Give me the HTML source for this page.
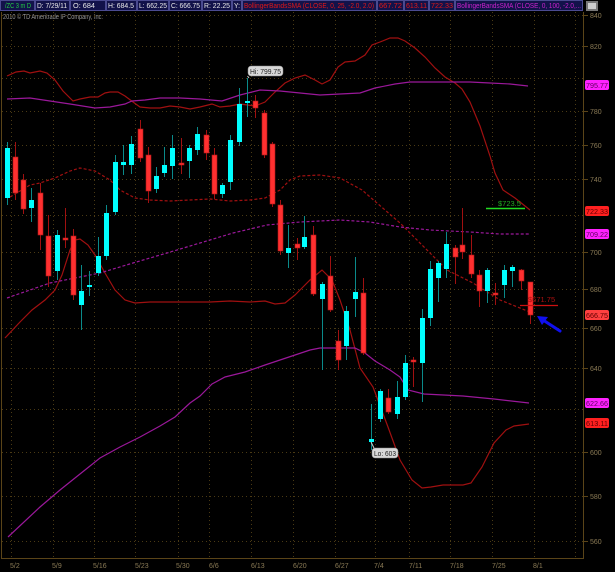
<!DOCTYPE html>
<html><head><meta charset="utf-8"><style>
html,body{margin:0;padding:0;background:#000;width:615px;height:572px;overflow:hidden}
svg{display:block}
text{font-family:"Liberation Sans",sans-serif}
</style></head><body>
<svg width="615" height="572" viewBox="0 0 615 572" xmlns="http://www.w3.org/2000/svg">
<rect width="615" height="572" fill="#000"/>
<!-- header -->
<rect x="0" y="0" width="583" height="11" fill="#12124a"/>
<g stroke="#4a4a90" stroke-width="1" fill="none">
<rect x="0.5" y="0.5" width="34" height="10"/><rect x="35.5" y="0.5" width="34" height="10"/><rect x="70.5" y="0.5" width="35" height="10"/><rect x="106.5" y="0.5" width="30" height="10"/><rect x="137.5" y="0.5" width="31" height="10"/><rect x="169.5" y="0.5" width="32" height="10"/><rect x="202.5" y="0.5" width="29" height="10"/><rect x="232.5" y="0.5" width="9" height="10"/><rect x="242.5" y="0.5" width="134" height="10"/><rect x="377.5" y="0.5" width="26" height="10"/><rect x="404.5" y="0.5" width="24" height="10"/><rect x="429.5" y="0.5" width="25" height="10"/><rect x="455.5" y="0.5" width="127" height="10"/>
</g>
<g font-size="7" fill="#e8e8e8" lengthAdjust="spacingAndGlyphs">
<text x="5" y="8" fill="#22cc44" textLength="26" lengthAdjust="spacingAndGlyphs">/ZC 3 m D</text>
<text x="37" y="8" textLength="30" lengthAdjust="spacingAndGlyphs">D: 7/29/11</text>
<text x="73" y="8" textLength="22" lengthAdjust="spacingAndGlyphs">O: 684</text>
<text x="108" y="8" textLength="26" lengthAdjust="spacingAndGlyphs">H: 684.5</text>
<text x="139" y="8" textLength="28" lengthAdjust="spacingAndGlyphs">L: 662.25</text>
<text x="171" y="8" textLength="29" lengthAdjust="spacingAndGlyphs">C: 666.75</text>
<text x="204" y="8" textLength="26" lengthAdjust="spacingAndGlyphs">R: 22.25</text>
<text x="234" y="8" textLength="6" lengthAdjust="spacingAndGlyphs">Y:</text>
<text x="244" y="8" fill="#e01818" textLength="130" lengthAdjust="spacingAndGlyphs">BollingerBandsSMA (CLOSE, 0, 25, -2.0, 2.0)</text>
<text x="379" y="8" fill="#e01818" textLength="23" lengthAdjust="spacingAndGlyphs">667.72</text>
<text x="406" y="8" fill="#e01818" textLength="21" lengthAdjust="spacingAndGlyphs">613.11</text>
<text x="431" y="8" fill="#e01818" textLength="22" lengthAdjust="spacingAndGlyphs">722.33</text>
<text x="457" y="8" fill="#cc22cc" textLength="124" lengthAdjust="spacingAndGlyphs">BollingerBandsSMA (CLOSE, 0, 100, -2.0,...</text>
</g>
<rect x="586" y="1" width="12" height="10" fill="#777"/><rect x="588" y="3" width="8" height="6" fill="#ccc"/>
<text x="3" y="19" font-size="7" fill="#999" textLength="100" lengthAdjust="spacingAndGlyphs">2010 © TD Ameritrade IP Company, Inc.</text>
<!-- axes -->
<line x1="1.5" y1="12" x2="1.5" y2="558" stroke="#5a4418"/>
<line x1="583.5" y1="12" x2="583.5" y2="558" stroke="#5a4418"/>
<line x1="1" y1="558.5" x2="584" y2="558.5" stroke="#5a4418"/>
<!-- grid -->
<g stroke="#4a3a14" stroke-dasharray="1 3" stroke-width="1">
<line x1="2" y1="15.5" x2="583" y2="15.5"/><line x1="2" y1="46.5" x2="583" y2="46.5"/><line x1="2" y1="78.5" x2="583" y2="78.5"/><line x1="2" y1="111.5" x2="583" y2="111.5"/><line x1="2" y1="145.5" x2="583" y2="145.5"/><line x1="2" y1="179.5" x2="583" y2="179.5"/><line x1="2" y1="215.5" x2="583" y2="215.5"/><line x1="2" y1="252.5" x2="583" y2="252.5"/><line x1="2" y1="289.5" x2="583" y2="289.5"/><line x1="2" y1="328.5" x2="583" y2="328.5"/><line x1="2" y1="368.5" x2="583" y2="368.5"/><line x1="2" y1="409.5" x2="583" y2="409.5"/><line x1="2" y1="452.5" x2="583" y2="452.5"/><line x1="2" y1="496.5" x2="583" y2="496.5"/><line x1="2" y1="541.5" x2="583" y2="541.5"/>
<line x1="11.5" y1="12" x2="11.5" y2="558"/><line x1="53.5" y1="12" x2="53.5" y2="558"/><line x1="94.5" y1="12" x2="94.5" y2="558"/><line x1="135.5" y1="12" x2="135.5" y2="558"/><line x1="178.5" y1="12" x2="178.5" y2="558"/><line x1="209.5" y1="12" x2="209.5" y2="558"/><line x1="251.5" y1="12" x2="251.5" y2="558"/><line x1="293.5" y1="12" x2="293.5" y2="558"/><line x1="335.5" y1="12" x2="335.5" y2="558"/><line x1="375.5" y1="12" x2="375.5" y2="558"/><line x1="409.5" y1="12" x2="409.5" y2="558"/><line x1="450.5" y1="12" x2="450.5" y2="558"/><line x1="492.5" y1="12" x2="492.5" y2="558"/><line x1="534.5" y1="12" x2="534.5" y2="558"/><line x1="575.5" y1="12" x2="575.5" y2="558"/>
</g>
<g stroke="#5a4418"><line x1="584" y1="15.5" x2="588" y2="15.5"/><line x1="584" y1="46.5" x2="588" y2="46.5"/><line x1="584" y1="111.5" x2="588" y2="111.5"/><line x1="584" y1="145.5" x2="588" y2="145.5"/><line x1="584" y1="179.5" x2="588" y2="179.5"/><line x1="584" y1="252.5" x2="588" y2="252.5"/><line x1="584" y1="289.5" x2="588" y2="289.5"/><line x1="584" y1="328.5" x2="588" y2="328.5"/><line x1="584" y1="368.5" x2="588" y2="368.5"/><line x1="584" y1="452.5" x2="588" y2="452.5"/><line x1="584" y1="496.5" x2="588" y2="496.5"/><line x1="584" y1="541.5" x2="588" y2="541.5"/></g>
<g font-size="7" fill="#8a7a55">
<text x="590" y="18">840</text><text x="590" y="49">820</text><text x="590" y="114">780</text><text x="590" y="148">760</text><text x="590" y="182">740</text><text x="590" y="255">700</text><text x="590" y="292">680</text><text x="590" y="331">660</text><text x="590" y="371">640</text><text x="590" y="455">600</text><text x="590" y="499">580</text><text x="590" y="544">560</text>
<text x="10" y="568">5/2</text><text x="52" y="568">5/9</text><text x="93" y="568">5/16</text><text x="135" y="568">5/23</text><text x="176" y="568">5/30</text><text x="209" y="568">6/6</text><text x="251" y="568">6/13</text><text x="293" y="568">6/20</text><text x="335" y="568">6/27</text><text x="374" y="568">7/4</text><text x="409" y="568">7/11</text><text x="450" y="568">7/18</text><text x="492" y="568">7/25</text><text x="533" y="568">8/1</text>
</g>
<!-- bands -->
<g fill="none" stroke-width="1.2">
<polyline stroke="#a01010" points="7,76 16,72 24,71 30,73 40,71 47,73 55,80 63,91 73,101 80,99 90,97 98,97 105,93 110,92 118,92 125,96 133,102 140,107 150,108 160,108 170,106 180,107 190,109 200,107 212,104 220,107 230,106 240,104 255,106 265,102 275,92 285,83 295,78 305,75 315,80 322,84 330,80 338,67 345,62 355,61 365,55 372,45 380,42 390,38 398,38 405,41 415,48 425,57 435,68 445,77 455,83 462,89 470,102 480,126 490,156 495,173 503,190 515,198 530,210"/>
<polyline stroke="#a01010" stroke-dasharray="3 2" points="10,197 30,185 40,183 55,178 70,171 80,168 95,171 110,180 120,190 135,198 150,200 170,201 190,200 210,199 230,201 250,200 265,198 280,190 290,180 300,176 320,175 340,178 362,190 400,223 447,270 473,283 500,300 530,312"/>
<polyline stroke="#a01010" points="5,338 20,322 32,310 45,300 55,290 62,275 70,250 75,240 80,239 88,245 95,255 105,273 115,290 125,300 135,303 150,302 170,302 190,302 210,302 230,301 250,302 265,301 275,304 285,303 295,295 300,290 310,280 322,270 332,280 340,300 350,330 360,368 373,387 388,427 400,460 412,480 422,488 431,487 443,485 463,485 471,483 482,467 494,443 506,430 514,426 529,424"/>
<polyline stroke="#9a189a" points="7,99 30,98 50,101 70,104 95,108 110,107 125,104 132,101 145,100 160,98 180,98 200,99 222,101 240,95 260,90 280,91 300,93 320,95 340,94 360,93 375,88 395,84 410,82 440,82 470,82 490,83 510,84 528,86"/>
<polyline stroke="#9a189a" stroke-dasharray="3 2" points="7,298 50,283 100,273 133,263 167,253 200,243 233,233 267,225 300,222 340,220 370,222 400,227 430,230 470,232 500,234 530,234"/>
<polyline stroke="#9a189a" points="8,537 40,507 60,490 85,470 100,458 120,447 140,437 160,426 175,417 190,403 200,396 212,384 225,377 245,372 265,365 280,360 295,355 310,350 320,348 355,348 365,353 375,361 390,370 400,377 408,390 424,394 463,396 494,399 529,403"/>
</g>
<!-- candles -->
<g>
<g stroke="#0a8a8a" stroke-width="1">
<line x1="7.5" y1="142" x2="7.5" y2="205"/><line x1="31.5" y1="188" x2="31.5" y2="222"/><line x1="57.5" y1="230" x2="57.5" y2="280"/><line x1="81.5" y1="265" x2="81.5" y2="330"/><line x1="89.5" y1="271" x2="89.5" y2="296"/><line x1="98.5" y1="237" x2="98.5" y2="276"/><line x1="106.5" y1="205" x2="106.5" y2="260"/><line x1="115.5" y1="155" x2="115.5" y2="215"/><line x1="123.5" y1="145" x2="123.5" y2="175"/><line x1="131.5" y1="136" x2="131.5" y2="174"/><line x1="156.5" y1="167" x2="156.5" y2="193"/><line x1="164.5" y1="147" x2="164.5" y2="177"/><line x1="172.5" y1="135" x2="172.5" y2="179"/><line x1="189.5" y1="145" x2="189.5" y2="178"/><line x1="197.5" y1="127" x2="197.5" y2="155"/><line x1="222.5" y1="183" x2="222.5" y2="198"/><line x1="230.5" y1="135" x2="230.5" y2="190"/><line x1="239.5" y1="88" x2="239.5" y2="146"/><line x1="247.5" y1="78" x2="247.5" y2="117"/><line x1="288.5" y1="225" x2="288.5" y2="268"/><line x1="304.5" y1="216" x2="304.5" y2="249"/><line x1="322.5" y1="282" x2="322.5" y2="370"/><line x1="346.5" y1="306" x2="346.5" y2="360"/><line x1="355.5" y1="257" x2="355.5" y2="317"/><line x1="371.5" y1="404" x2="371.5" y2="450"/><line x1="380.5" y1="389" x2="380.5" y2="422"/><line x1="397.5" y1="381" x2="397.5" y2="419"/><line x1="405.5" y1="355" x2="405.5" y2="400"/><line x1="422.5" y1="309" x2="422.5" y2="402"/><line x1="430.5" y1="261" x2="430.5" y2="326"/><line x1="438.5" y1="261" x2="438.5" y2="302"/><line x1="446.5" y1="232" x2="446.5" y2="278"/><line x1="487.5" y1="268" x2="487.5" y2="303"/><line x1="504.5" y1="265" x2="504.5" y2="298"/><line x1="512.5" y1="265" x2="512.5" y2="287"/>
</g>
<g stroke="#a01010" stroke-width="1">
<line x1="15.5" y1="142" x2="15.5" y2="200"/><line x1="23.5" y1="174" x2="23.5" y2="214"/><line x1="40.5" y1="183" x2="40.5" y2="250"/><line x1="48.5" y1="215" x2="48.5" y2="287"/><line x1="65.5" y1="208" x2="65.5" y2="248"/><line x1="73.5" y1="229" x2="73.5" y2="300"/><line x1="140.5" y1="120" x2="140.5" y2="162"/><line x1="148.5" y1="147" x2="148.5" y2="203"/><line x1="181.5" y1="138" x2="181.5" y2="174"/><line x1="206.5" y1="130" x2="206.5" y2="160"/><line x1="214.5" y1="148" x2="214.5" y2="199"/><line x1="255.5" y1="95" x2="255.5" y2="118"/><line x1="264.5" y1="110" x2="264.5" y2="158"/><line x1="272.5" y1="142" x2="272.5" y2="207"/><line x1="280.5" y1="200" x2="280.5" y2="255"/><line x1="297.5" y1="238" x2="297.5" y2="260"/><line x1="313.5" y1="226" x2="313.5" y2="296"/><line x1="330.5" y1="256" x2="330.5" y2="312"/><line x1="338.5" y1="330" x2="338.5" y2="370"/><line x1="363.5" y1="278" x2="363.5" y2="355"/><line x1="388.5" y1="389" x2="388.5" y2="414"/><line x1="413.5" y1="357" x2="413.5" y2="387"/><line x1="455.5" y1="245" x2="455.5" y2="284"/><line x1="462.5" y1="208" x2="462.5" y2="259"/><line x1="471.5" y1="235" x2="471.5" y2="278"/><line x1="479.5" y1="270" x2="479.5" y2="307"/><line x1="495.5" y1="283" x2="495.5" y2="305"/><line x1="521.5" y1="269" x2="521.5" y2="290"/><line x1="530.5" y1="282" x2="530.5" y2="324"/>
</g>
<g fill="#00ffff">
<rect x="5" y="148" width="5" height="50"/><rect x="29" y="200" width="5" height="8"/><rect x="55" y="235" width="5" height="36"/><rect x="79" y="291" width="5" height="14"/><rect x="87" y="285" width="5" height="2"/><rect x="96" y="256" width="5" height="17"/><rect x="104" y="213" width="5" height="43"/><rect x="113" y="162" width="5" height="50"/><rect x="121" y="162" width="5" height="3"/><rect x="129" y="144" width="5" height="21"/><rect x="154" y="176" width="5" height="13"/><rect x="162" y="165" width="5" height="8"/><rect x="170" y="148" width="5" height="18"/><rect x="187" y="148" width="5" height="13"/><rect x="195" y="134" width="5" height="16"/><rect x="220" y="185" width="5" height="9"/><rect x="228" y="140" width="5" height="42"/><rect x="237" y="104" width="5" height="38"/><rect x="245" y="101" width="5" height="2"/><rect x="286" y="248" width="5" height="5"/><rect x="302" y="237" width="5" height="10"/><rect x="320" y="284" width="5" height="15"/><rect x="344" y="311" width="5" height="35"/><rect x="353" y="292" width="5" height="7"/><rect x="369" y="439" width="5" height="3"/><rect x="378" y="391" width="5" height="28"/><rect x="395" y="397" width="5" height="17"/><rect x="403" y="363" width="5" height="34"/><rect x="420" y="318" width="5" height="45"/><rect x="428" y="269" width="5" height="49"/><rect x="436" y="263" width="5" height="15"/><rect x="444" y="244" width="5" height="25"/><rect x="485" y="270" width="5" height="21"/><rect x="502" y="270" width="5" height="15"/><rect x="510" y="267" width="5" height="4"/>
</g>
<g fill="#ff3030" stroke="#b01818" stroke-width="0.6">
<rect x="13" y="157" width="5" height="36"/><rect x="21" y="180" width="5" height="29"/><rect x="38" y="193" width="5" height="42"/><rect x="46" y="236" width="5" height="40"/><rect x="63" y="238" width="5" height="2"/><rect x="71" y="236" width="5" height="59"/><rect x="138" y="129" width="5" height="29"/><rect x="146" y="155" width="5" height="36"/><rect x="179" y="163" width="5" height="2"/><rect x="204" y="135" width="5" height="18"/><rect x="212" y="155" width="5" height="39"/><rect x="253" y="101" width="5" height="7"/><rect x="262" y="113" width="5" height="42"/><rect x="270" y="144" width="5" height="60"/><rect x="278" y="205" width="5" height="46"/><rect x="295" y="244" width="5" height="4"/><rect x="311" y="235" width="5" height="59"/><rect x="328" y="276" width="5" height="34"/><rect x="336" y="341" width="5" height="19"/><rect x="361" y="293" width="5" height="60"/><rect x="386" y="398" width="5" height="14"/><rect x="411" y="360" width="5" height="2"/><rect x="453" y="248" width="5" height="9"/><rect x="460" y="245" width="5" height="7"/><rect x="469" y="255" width="5" height="19"/><rect x="477" y="275" width="5" height="16"/><rect x="493" y="293" width="5" height="2"/><rect x="519" y="270" width="5" height="11"/><rect x="528" y="282" width="5" height="33"/>
</g>
</g>
<!-- annotations -->
<line x1="486" y1="208.5" x2="525" y2="208.5" stroke="#22dd22" stroke-width="1.5"/>
<text x="498" y="206" font-size="7.5" fill="#22aa22">$723.5</text>
<line x1="520" y1="305.5" x2="558" y2="305.5" stroke="#cc1010" stroke-width="1.2"/>
<text x="528" y="302" font-size="7.5" fill="#aa1010">$671.75</text>
<path d="M560,331 L543,320" stroke="#1010ee" stroke-width="3" stroke-linecap="round"/>
<path d="M537,316 L548,317 L542,325 Z" fill="#1010ee"/>
<rect x="248" y="66" width="35" height="10" rx="3" fill="#d8d8d8" stroke="#888" stroke-width="0.5"/>
<text x="250" y="74" font-size="7" fill="#222" textLength="31" lengthAdjust="spacingAndGlyphs">Hi: 799.75</text>
<line x1="247.5" y1="76" x2="249" y2="78" stroke="#ccc"/>
<rect x="372" y="448" width="26" height="10" rx="3" fill="#d8d8d8" stroke="#888" stroke-width="0.5"/>
<text x="374" y="456" font-size="7" fill="#222" textLength="22" lengthAdjust="spacingAndGlyphs">Lo: 603</text>
<line x1="371" y1="442" x2="374" y2="448" stroke="#ccc"/>
<!-- right labels -->
<g font-size="7">
<rect x="585" y="80" width="24" height="10" rx="2" fill="#ff22ff"/><text x="586" y="88" fill="#600060" textLength="22" lengthAdjust="spacingAndGlyphs">795.77</text>
<rect x="585" y="206" width="24" height="10" rx="2" fill="#ff2020"/><text x="586" y="214" fill="#600000" textLength="22" lengthAdjust="spacingAndGlyphs">722.33</text>
<rect x="585" y="229" width="24" height="10" rx="2" fill="#ff22ff"/><text x="586" y="237" fill="#600060" textLength="22" lengthAdjust="spacingAndGlyphs">709.22</text>
<rect x="585" y="310" width="24" height="10" rx="2" fill="#ff4040"/><text x="586" y="318" fill="#600000" textLength="22" lengthAdjust="spacingAndGlyphs">666.75</text>
<rect x="585" y="398" width="24" height="10" rx="2" fill="#ff22ff"/><text x="586" y="406" fill="#600060" textLength="22" lengthAdjust="spacingAndGlyphs">622.66</text>
<rect x="585" y="418" width="24" height="10" rx="2" fill="#ff2020"/><text x="586" y="426" fill="#600000" textLength="22" lengthAdjust="spacingAndGlyphs">613.11</text>
</g>
</svg>
</body></html>
